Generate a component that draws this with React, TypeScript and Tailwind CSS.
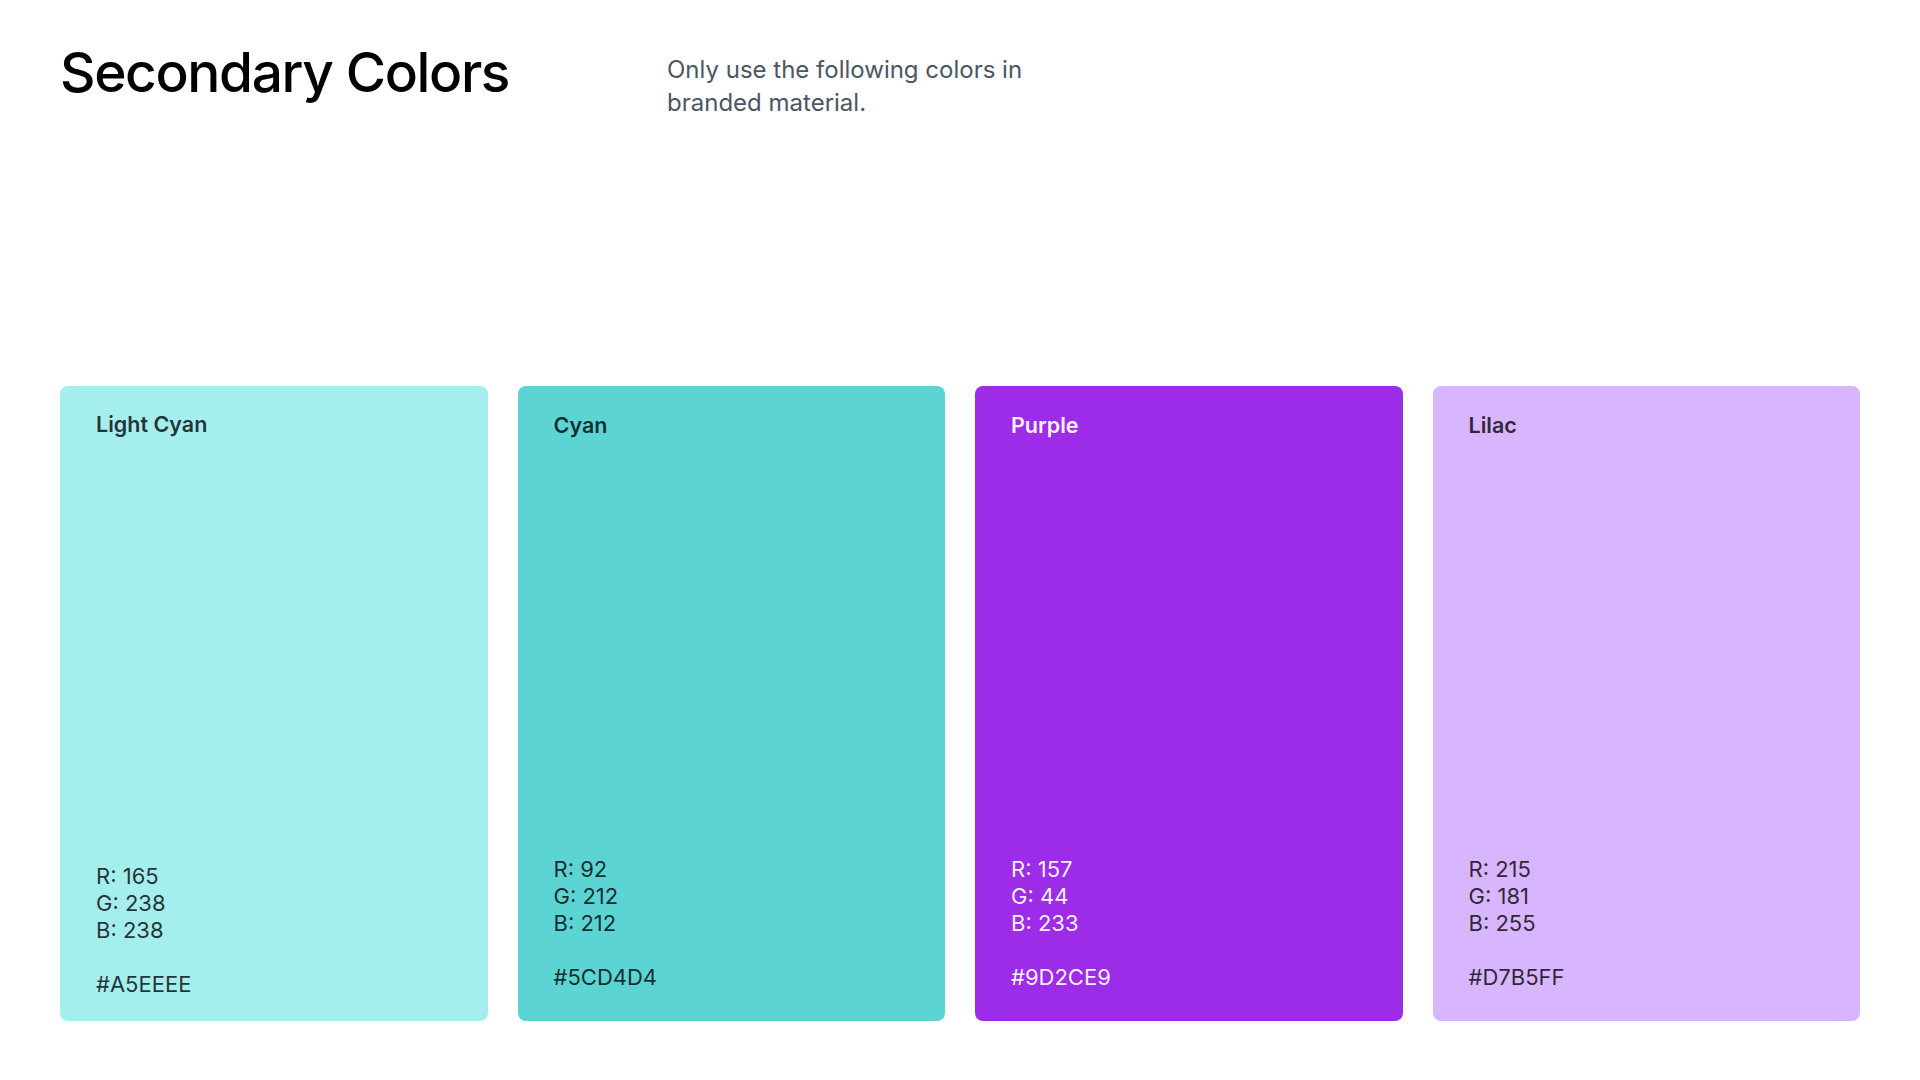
import React from "react";

type Swatch = {
  name: string;
  rgb: [number, number, number];
  hex: string;
  bg: string;
  text: string;
  pad: string;
};

const swatches: Swatch[] = [
  { name: "Light Cyan", rgb: [165, 238, 238], hex: "#A5EEEE", bg: "bg-[#a5eeee]", text: "text-black/80", pad: "pt-[23px] pb-[23px]" },
  { name: "Cyan", rgb: [92, 212, 212], hex: "#5CD4D4", bg: "bg-[#5cd4d4]", text: "text-black/80", pad: "pt-[24px] pb-[30px]" },
  { name: "Purple", rgb: [157, 44, 233], hex: "#9D2CE9", bg: "bg-[#9d2ce9]", text: "text-white/95", pad: "pt-[24px] pb-[30px]" },
  { name: "Lilac", rgb: [215, 181, 255], hex: "#D7B5FF", bg: "bg-[#d7b5ff]", text: "text-black/80", pad: "pt-[24px] pb-[30px]" },
];

export default function App() {
  return (
    <div
      className="w-[1920px] h-[1080px] bg-white flex flex-col px-[60px]"
      style={{ fontFamily: "Inter, 'Noto Sans', sans-serif" }}
    >
      <header className="flex pt-[37px]">
        <h1 className="w-[607px] text-[55px] leading-[70px] font-medium tracking-tight text-black">
          Secondary Colors
        </h1>
        <p className="w-[400px] mt-[16px] text-[24px] leading-[33px] text-[#4b5563]">
          Only use the following colors in branded material.
        </p>
      </header>
      <div className="mt-[267px] grid grid-cols-4 gap-[30px] h-[635px]">
        {swatches.map((s) => (
          <div
            key={s.name}
            className={`${s.bg} ${s.text} ${s.pad} rounded-[8px] px-[36px] flex flex-col justify-between`}
          >
            <div className="text-[21.5px] leading-[30px] font-semibold">{s.name}</div>
            <div className="text-[22px] leading-[27px]">
              <div>R: {s.rgb[0]}</div>
              <div>G: {s.rgb[1]}</div>
              <div>B: {s.rgb[2]}</div>
              <div className="h-[27px]" />
              <div>{s.hex}</div>
            </div>
          </div>
        ))}
      </div>
    </div>
  );
}
